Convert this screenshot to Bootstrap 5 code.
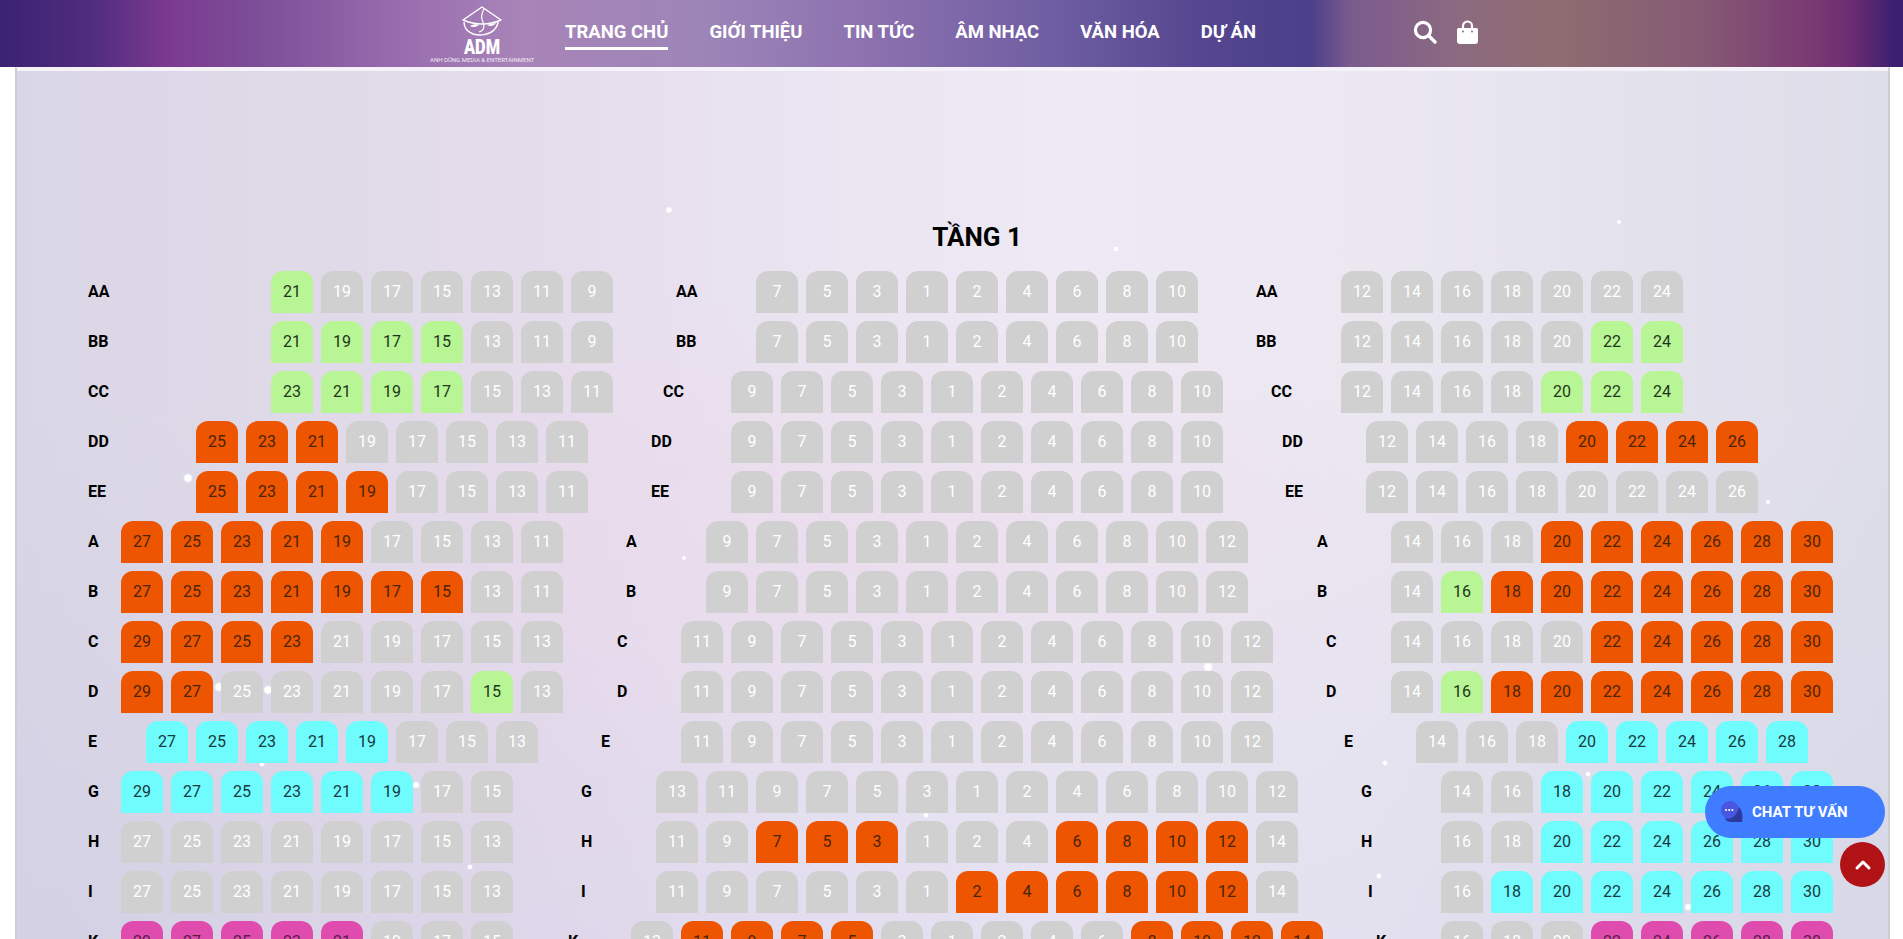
<!DOCTYPE html>
<html lang="vi">
<head>
<meta charset="utf-8">
<title>Tầng 1</title>
<link href="https://cdn.jsdelivr.net/npm/bootstrap@5.3.0/dist/css/bootstrap.min.css" rel="stylesheet">
<style>
html,body{height:100vh;overflow:hidden;background:#fff;font-family:Roboto,"Liberation Sans",sans-serif}
.topbar{height:67px;padding:0;background:linear-gradient(90deg,#3b2272 0,#4f2c7e 90px,#7b3a90 170px,#7d5199 270px,#9568ac 380px,#a884b8 520px,#9d85b8 700px,#8b70ae 880px,#6f5ea2 1050px,#54468f 1200px,#4b3f8b 1310px,#7a5b8e 1350px,#8c6a80 1460px,#8e6c70 1560px,#855a74 1700px,#7a3a72 1810px,#6d2d72 1850px,#3a1f70 1895px)}
.topwrap{margin-left:430px;width:1049px;height:67px}
.brand-box{width:104px;margin:0 31px 0 0;padding:0;line-height:1;text-align:center}
.brand-box svg{display:block;margin:0 auto}
.brand-line{display:block;font-size:6px;line-height:7px;color:#f3e9f6;white-space:nowrap;letter-spacing:0;margin-top:1px}
.menu-row{display:flex;gap:41px}
.menu-link{color:#fff;font-size:18.500px;font-weight:700;line-height:21px;padding:0 0 4px;border-bottom:3px solid transparent;margin-top:4px;text-decoration:none}
.menu-link:hover{color:#fff}
.menu-link.on{border-bottom-color:#fff}
.shop-row{display:flex;align-items:center;gap:19px;margin-left:auto;margin-top:-3px}
.shop-ico{display:block}
.hall{margin:0 13px 0 15px;height:872px;border-left:2px solid #cfccd6;border-right:2px solid #cfccd6;border-top:1px solid #f4f1f8;padding:3px 0 0;background:#f5f2f9;overflow:hidden}
.hall-in{height:869px;padding:0 0 0 71px;background:
radial-gradient(circle 3.5px at 652px 139px,#fff 55%,transparent),
radial-gradient(circle 3px at 1099px 178px,#fff 55%,transparent),
radial-gradient(circle 2.5px at 1602px 151px,#fff 55%,transparent),
radial-gradient(circle 5px at 171px 407px,#fff 60%,transparent),
radial-gradient(circle 2.5px at 667px 487px,#fff 55%,transparent),
radial-gradient(circle 2.5px at 1751px 431px,#fff 55%,transparent),
radial-gradient(circle 5px at 202px 616px,#fff 60%,transparent),
radial-gradient(circle 5px at 251px 619px,#fff 60%,transparent),
radial-gradient(circle 5px at 1191px 596px,#fff 60%,transparent),
radial-gradient(circle 3px at 245px 693px,#fff 55%,transparent),
radial-gradient(circle 4px at 399px 714px,#fff 55%,transparent),
radial-gradient(circle 3px at 909px 744px,#fff 55%,transparent),
radial-gradient(circle 3px at 453px 796px,#fff 55%,transparent),
radial-gradient(circle 3px at 1368px 692px,#fff 55%,transparent),
radial-gradient(circle 3px at 1571px 703px,#fff 55%,transparent),
radial-gradient(circle 3px at 1362px 805px,#fff 55%,transparent),
radial-gradient(circle 4px at 1671px 836px,#fff 55%,transparent),
radial-gradient(ellipse 620px 260px at 830px 475px,rgba(238,216,234,.55),transparent),
linear-gradient(180deg,rgba(255,255,255,.1) 0,rgba(255,255,255,.1) 330px,rgba(205,205,235,.2) 869px),
linear-gradient(90deg,#d5d2e3 0,#dbd5e5 250px,#e3d9ea 540px,#e8e2f0 800px,#ece7f3 1050px,#e9e5f0 1350px,#e0deea 1640px,#dadae7 1873px)}
.floor-title{width:1778px;height:200px;margin:0;padding:151px 0 0;font-size:26px;font-weight:700;line-height:30px;color:#000;text-align:center}
.rw{display:grid;height:42px;margin-bottom:8px;align-items:center;color:#000}
.rw-aa{grid-template-columns:183px 405px 80px 500px 85px auto}
.rw-cc{grid-template-columns:183px 392px 68px 540px 70px auto}
.rw-dd{grid-template-columns:108px 455px 80px 551px 84px auto}
.rw-ee{grid-template-columns:108px 455px 80px 554px 81px auto}
.rw-a{grid-template-columns:33px 505px 80px 611px 74px auto}
.rw-c{grid-template-columns:33px 496px 64px 645px 65px auto}
.rw-e{grid-template-columns:58px 455px 80px 663px 72px auto}
.rw-g{grid-template-columns:33px 460px 75px 705px 80px auto}
.rw-i{grid-template-columns:33px 460px 75px 712px 73px auto}
.rw-k{grid-template-columns:33px 447px 63px 745px 65px auto}
.rlab{font-size:16px;font-weight:700;line-height:42px;height:42px;white-space:nowrap}
.zone{display:flex;gap:8px}
.st{display:block;flex:0 0 42px;width:42px;height:42px;border-radius:12px 12px 0 0;background:#d0d0d0;color:#fff;font-size:16px;line-height:42px;text-align:center}
.to{background:#ee5500;color:#4a2408}
.tg{background:#b8f594;color:#21351a}
.tc{background:#6ffcfd;color:#17393f}
.tp{background:#df4cae;color:#5a1c46}
.chat-pill{position:fixed;right:18px;bottom:101px;width:180px;height:52px;border:0;border-radius:26px;background:#3f7cff;color:#fff;font-size:15px;font-weight:700;display:flex;align-items:center;padding:0 0 0 15px;gap:8px}
.to-top{position:fixed;right:18px;bottom:52px;width:45px;height:45px;border:0;border-radius:50%;background:#b01216;padding:0;display:flex;align-items:center;justify-content:center}
</style>
</head>
<body>
<nav class="navbar topbar">
  <div class="topwrap d-flex align-items-center">
    <a class="brand-box text-decoration-none" href="#">
      <svg width="44" height="51" viewBox="0 0 44 51" fill="none" stroke="#fff">
        <path d="M22 3 3 16q19 8 38 0Z" stroke-width="1.500" stroke-linejoin="round"/>
        <path d="M4 18c0 6 4 10 9 12 7 2 16 1 21-4 3-3 4-6 4-9" stroke-width="1.400"/>
        <path d="M24 5c-3 5-3 9-1 13 2 4 1 9-4 10" stroke-width="1.200"/>
        <path d="M10 22c3-2 7-2 9-1-3 2-6 3-9 1ZM27 21c3-1 6-2 9-2-2 3-6 4-9 2Z" fill="#fff" stroke="none"/>
        <text x="0" y="0" transform="translate(22 49.500) scale(.82 1)" text-anchor="middle" fill="#fff" stroke="none" font-family="Roboto,sans-serif" font-size="20" font-weight="900">ADM</text>
      </svg>
      <span class="brand-line">ANH DŨNG MEDIA &amp; ENTERTAINMENT</span>
    </a>
    <div class="menu-row">
      <a class="menu-link on" href="#">TRANG CHỦ</a>
      <a class="menu-link" href="#">GIỚI THIỆU</a>
      <a class="menu-link" href="#">TIN TỨC</a>
      <a class="menu-link" href="#">ÂM NHẠC</a>
      <a class="menu-link" href="#">VĂN HÓA</a>
      <a class="menu-link" href="#">DỰ ÁN</a>
    </div>
    <div class="shop-row">
      <svg class="shop-ico" width="24" height="24" viewBox="0 0 24 24" fill="none" stroke="#fff"><circle cx="10" cy="10" r="7.600" stroke-width="3.200"/><path d="M15.500 15.500 22 22" stroke-width="3.400" stroke-linecap="round"/></svg>
      <svg class="shop-ico" width="23" height="25" viewBox="0 0 23 25"><path d="M7 9V6a4.500 4.500 0 0 1 9 0v3" fill="none" stroke="#fff" stroke-width="2.200"/><path d="M2.500 8h18a1.500 1.500 0 0 1 1.500 1.500V21a3 3 0 0 1-3 3H4a3 3 0 0 1-3-3V9.500A1.500 1.500 0 0 1 2.500 8Z" fill="#fff"/><circle cx="7" cy="11.500" r="1" fill="#8a6a7c"/><circle cx="16" cy="11.500" r="1" fill="#8a6a7c"/></svg>
    </div>
  </div>
</nav>
<main class="hall">
  <div class="hall-in">
    <h2 class="floor-title">TẦNG 1</h2>
    <div class="rw rw-aa"><span class="rlab">AA</span><div class="zone"><span class="st tg">21</span><span class="st">19</span><span class="st">17</span><span class="st">15</span><span class="st">13</span><span class="st">11</span><span class="st">9</span></div><span class="rlab">AA</span><div class="zone"><span class="st">7</span><span class="st">5</span><span class="st">3</span><span class="st">1</span><span class="st">2</span><span class="st">4</span><span class="st">6</span><span class="st">8</span><span class="st">10</span></div><span class="rlab">AA</span><div class="zone"><span class="st">12</span><span class="st">14</span><span class="st">16</span><span class="st">18</span><span class="st">20</span><span class="st">22</span><span class="st">24</span></div></div>
    <div class="rw rw-aa"><span class="rlab">BB</span><div class="zone"><span class="st tg">21</span><span class="st tg">19</span><span class="st tg">17</span><span class="st tg">15</span><span class="st">13</span><span class="st">11</span><span class="st">9</span></div><span class="rlab">BB</span><div class="zone"><span class="st">7</span><span class="st">5</span><span class="st">3</span><span class="st">1</span><span class="st">2</span><span class="st">4</span><span class="st">6</span><span class="st">8</span><span class="st">10</span></div><span class="rlab">BB</span><div class="zone"><span class="st">12</span><span class="st">14</span><span class="st">16</span><span class="st">18</span><span class="st">20</span><span class="st tg">22</span><span class="st tg">24</span></div></div>
    <div class="rw rw-cc"><span class="rlab">CC</span><div class="zone"><span class="st tg">23</span><span class="st tg">21</span><span class="st tg">19</span><span class="st tg">17</span><span class="st">15</span><span class="st">13</span><span class="st">11</span></div><span class="rlab">CC</span><div class="zone"><span class="st">9</span><span class="st">7</span><span class="st">5</span><span class="st">3</span><span class="st">1</span><span class="st">2</span><span class="st">4</span><span class="st">6</span><span class="st">8</span><span class="st">10</span></div><span class="rlab">CC</span><div class="zone"><span class="st">12</span><span class="st">14</span><span class="st">16</span><span class="st">18</span><span class="st tg">20</span><span class="st tg">22</span><span class="st tg">24</span></div></div>
    <div class="rw rw-dd"><span class="rlab">DD</span><div class="zone"><span class="st to">25</span><span class="st to">23</span><span class="st to">21</span><span class="st">19</span><span class="st">17</span><span class="st">15</span><span class="st">13</span><span class="st">11</span></div><span class="rlab">DD</span><div class="zone"><span class="st">9</span><span class="st">7</span><span class="st">5</span><span class="st">3</span><span class="st">1</span><span class="st">2</span><span class="st">4</span><span class="st">6</span><span class="st">8</span><span class="st">10</span></div><span class="rlab">DD</span><div class="zone"><span class="st">12</span><span class="st">14</span><span class="st">16</span><span class="st">18</span><span class="st to">20</span><span class="st to">22</span><span class="st to">24</span><span class="st to">26</span></div></div>
    <div class="rw rw-ee"><span class="rlab">EE</span><div class="zone"><span class="st to">25</span><span class="st to">23</span><span class="st to">21</span><span class="st to">19</span><span class="st">17</span><span class="st">15</span><span class="st">13</span><span class="st">11</span></div><span class="rlab">EE</span><div class="zone"><span class="st">9</span><span class="st">7</span><span class="st">5</span><span class="st">3</span><span class="st">1</span><span class="st">2</span><span class="st">4</span><span class="st">6</span><span class="st">8</span><span class="st">10</span></div><span class="rlab">EE</span><div class="zone"><span class="st">12</span><span class="st">14</span><span class="st">16</span><span class="st">18</span><span class="st">20</span><span class="st">22</span><span class="st">24</span><span class="st">26</span></div></div>
    <div class="rw rw-a"><span class="rlab">A</span><div class="zone"><span class="st to">27</span><span class="st to">25</span><span class="st to">23</span><span class="st to">21</span><span class="st to">19</span><span class="st">17</span><span class="st">15</span><span class="st">13</span><span class="st">11</span></div><span class="rlab">A</span><div class="zone"><span class="st">9</span><span class="st">7</span><span class="st">5</span><span class="st">3</span><span class="st">1</span><span class="st">2</span><span class="st">4</span><span class="st">6</span><span class="st">8</span><span class="st">10</span><span class="st">12</span></div><span class="rlab">A</span><div class="zone"><span class="st">14</span><span class="st">16</span><span class="st">18</span><span class="st to">20</span><span class="st to">22</span><span class="st to">24</span><span class="st to">26</span><span class="st to">28</span><span class="st to">30</span></div></div>
    <div class="rw rw-a"><span class="rlab">B</span><div class="zone"><span class="st to">27</span><span class="st to">25</span><span class="st to">23</span><span class="st to">21</span><span class="st to">19</span><span class="st to">17</span><span class="st to">15</span><span class="st">13</span><span class="st">11</span></div><span class="rlab">B</span><div class="zone"><span class="st">9</span><span class="st">7</span><span class="st">5</span><span class="st">3</span><span class="st">1</span><span class="st">2</span><span class="st">4</span><span class="st">6</span><span class="st">8</span><span class="st">10</span><span class="st">12</span></div><span class="rlab">B</span><div class="zone"><span class="st">14</span><span class="st tg">16</span><span class="st to">18</span><span class="st to">20</span><span class="st to">22</span><span class="st to">24</span><span class="st to">26</span><span class="st to">28</span><span class="st to">30</span></div></div>
    <div class="rw rw-c"><span class="rlab">C</span><div class="zone"><span class="st to">29</span><span class="st to">27</span><span class="st to">25</span><span class="st to">23</span><span class="st">21</span><span class="st">19</span><span class="st">17</span><span class="st">15</span><span class="st">13</span></div><span class="rlab">C</span><div class="zone"><span class="st">11</span><span class="st">9</span><span class="st">7</span><span class="st">5</span><span class="st">3</span><span class="st">1</span><span class="st">2</span><span class="st">4</span><span class="st">6</span><span class="st">8</span><span class="st">10</span><span class="st">12</span></div><span class="rlab">C</span><div class="zone"><span class="st">14</span><span class="st">16</span><span class="st">18</span><span class="st">20</span><span class="st to">22</span><span class="st to">24</span><span class="st to">26</span><span class="st to">28</span><span class="st to">30</span></div></div>
    <div class="rw rw-c"><span class="rlab">D</span><div class="zone"><span class="st to">29</span><span class="st to">27</span><span class="st">25</span><span class="st">23</span><span class="st">21</span><span class="st">19</span><span class="st">17</span><span class="st tg">15</span><span class="st">13</span></div><span class="rlab">D</span><div class="zone"><span class="st">11</span><span class="st">9</span><span class="st">7</span><span class="st">5</span><span class="st">3</span><span class="st">1</span><span class="st">2</span><span class="st">4</span><span class="st">6</span><span class="st">8</span><span class="st">10</span><span class="st">12</span></div><span class="rlab">D</span><div class="zone"><span class="st">14</span><span class="st tg">16</span><span class="st to">18</span><span class="st to">20</span><span class="st to">22</span><span class="st to">24</span><span class="st to">26</span><span class="st to">28</span><span class="st to">30</span></div></div>
    <div class="rw rw-e"><span class="rlab">E</span><div class="zone"><span class="st tc">27</span><span class="st tc">25</span><span class="st tc">23</span><span class="st tc">21</span><span class="st tc">19</span><span class="st">17</span><span class="st">15</span><span class="st">13</span></div><span class="rlab">E</span><div class="zone"><span class="st">11</span><span class="st">9</span><span class="st">7</span><span class="st">5</span><span class="st">3</span><span class="st">1</span><span class="st">2</span><span class="st">4</span><span class="st">6</span><span class="st">8</span><span class="st">10</span><span class="st">12</span></div><span class="rlab">E</span><div class="zone"><span class="st">14</span><span class="st">16</span><span class="st">18</span><span class="st tc">20</span><span class="st tc">22</span><span class="st tc">24</span><span class="st tc">26</span><span class="st tc">28</span></div></div>
    <div class="rw rw-g"><span class="rlab">G</span><div class="zone"><span class="st tc">29</span><span class="st tc">27</span><span class="st tc">25</span><span class="st tc">23</span><span class="st tc">21</span><span class="st tc">19</span><span class="st">17</span><span class="st">15</span></div><span class="rlab">G</span><div class="zone"><span class="st">13</span><span class="st">11</span><span class="st">9</span><span class="st">7</span><span class="st">5</span><span class="st">3</span><span class="st">1</span><span class="st">2</span><span class="st">4</span><span class="st">6</span><span class="st">8</span><span class="st">10</span><span class="st">12</span></div><span class="rlab">G</span><div class="zone"><span class="st">14</span><span class="st">16</span><span class="st tc">18</span><span class="st tc">20</span><span class="st tc">22</span><span class="st tc">24</span><span class="st tc">26</span><span class="st tc">28</span></div></div>
    <div class="rw rw-g"><span class="rlab">H</span><div class="zone"><span class="st">27</span><span class="st">25</span><span class="st">23</span><span class="st">21</span><span class="st">19</span><span class="st">17</span><span class="st">15</span><span class="st">13</span></div><span class="rlab">H</span><div class="zone"><span class="st">11</span><span class="st">9</span><span class="st to">7</span><span class="st to">5</span><span class="st to">3</span><span class="st">1</span><span class="st">2</span><span class="st">4</span><span class="st to">6</span><span class="st to">8</span><span class="st to">10</span><span class="st to">12</span><span class="st">14</span></div><span class="rlab">H</span><div class="zone"><span class="st">16</span><span class="st">18</span><span class="st tc">20</span><span class="st tc">22</span><span class="st tc">24</span><span class="st tc">26</span><span class="st tc">28</span><span class="st tc">30</span></div></div>
    <div class="rw rw-i"><span class="rlab">I</span><div class="zone"><span class="st">27</span><span class="st">25</span><span class="st">23</span><span class="st">21</span><span class="st">19</span><span class="st">17</span><span class="st">15</span><span class="st">13</span></div><span class="rlab">I</span><div class="zone"><span class="st">11</span><span class="st">9</span><span class="st">7</span><span class="st">5</span><span class="st">3</span><span class="st">1</span><span class="st to">2</span><span class="st to">4</span><span class="st to">6</span><span class="st to">8</span><span class="st to">10</span><span class="st to">12</span><span class="st">14</span></div><span class="rlab">I</span><div class="zone"><span class="st">16</span><span class="st tc">18</span><span class="st tc">20</span><span class="st tc">22</span><span class="st tc">24</span><span class="st tc">26</span><span class="st tc">28</span><span class="st tc">30</span></div></div>
    <div class="rw rw-k"><span class="rlab">K</span><div class="zone"><span class="st tp">29</span><span class="st tp">27</span><span class="st tp">25</span><span class="st tp">23</span><span class="st tp">21</span><span class="st">19</span><span class="st">17</span><span class="st">15</span></div><span class="rlab">K</span><div class="zone"><span class="st">13</span><span class="st to">11</span><span class="st to">9</span><span class="st to">7</span><span class="st to">5</span><span class="st">3</span><span class="st">1</span><span class="st">2</span><span class="st">4</span><span class="st">6</span><span class="st to">8</span><span class="st to">10</span><span class="st to">12</span><span class="st to">14</span></div><span class="rlab">K</span><div class="zone"><span class="st">16</span><span class="st">18</span><span class="st">20</span><span class="st tp">22</span><span class="st tp">24</span><span class="st tp">26</span><span class="st tp">28</span><span class="st tp">30</span></div></div>
  </div>
</main>
<button class="chat-pill" type="button">
  <svg width="24" height="22" viewBox="0 0 24 22"><circle cx="10" cy="9" r="9" fill="#4a55e0"/><path d="M19 6c3 3 4 8 3 15H12c-4 0-7-2-7-4 5 2 11 0 14-11Z" fill="#2c3a9e"/><circle cx="6" cy="9" r="1.100" fill="#fff"/><circle cx="9.200" cy="9" r="1.100" fill="#fff"/><circle cx="12.400" cy="9" r="1.100" fill="#fff"/></svg>
  <span>CHAT TƯ VẤN</span>
</button>
<button class="to-top" type="button" aria-label="Lên đầu trang"><svg width="18" height="12" viewBox="0 0 18 12" fill="none" stroke="#fff" stroke-width="3" stroke-linecap="round" stroke-linejoin="round"><path d="M3 9 9 3l6 6"/></svg></button>
<script src="https://cdn.jsdelivr.net/npm/bootstrap@5.3.0/dist/js/bootstrap.bundle.min.js"></script>
</body>
</html>
